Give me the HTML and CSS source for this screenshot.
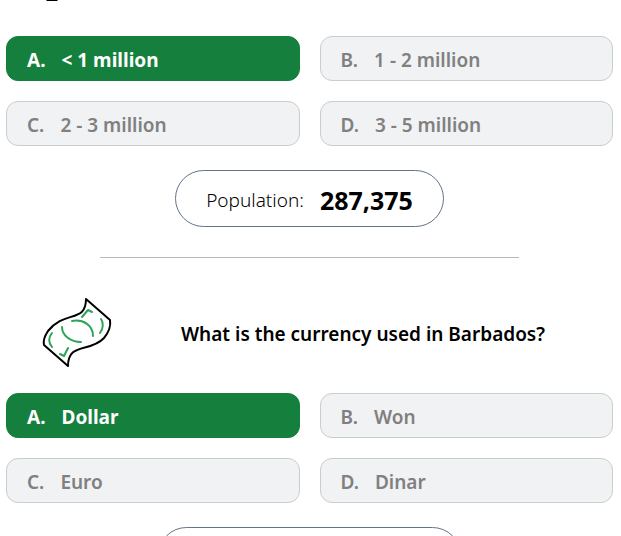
FILE: index.html
```html
<!DOCTYPE html>
<html lang="en">
<head>
<meta charset="utf-8">
<meta name="viewport" content="width=device-width, initial-scale=1">
<title>Barbados quiz</title>
<link rel="stylesheet" href="styles.css">
</head>
<body>
<main class="quiz">
  <section class="question">
    <svg class="icon-edge" viewBox="0 0 12 1" aria-hidden="true"><path d="M0 0H12L11 1H1Z"/></svg>
    <div class="options">
      <button class="option correct" type="button"><span>A.</span><span>&lt; 1 million</span></button>
      <button class="option" type="button"><span>B.</span><span>1 - 2 million</span></button>
      <button class="option" type="button"><span>C.</span><span>2 - 3 million</span></button>
      <button class="option" type="button"><span>D.</span><span>3 - 5 million</span></button>
    </div>
    <p class="answer"><span>Population:</span><strong>287,375</strong></p>
  </section>
  <hr class="divider">
  <section class="question">
    <header class="prompt">
      <svg class="bill" viewBox="11 12 72 72" aria-hidden="true">
        <path class="paper" d="M56 14C56 38 35 25 18 46C14 52 13 56 14 60L38 81C38 57 60 68 74 53C79 47 81 41 80 35Z"/>
        <path class="ink" d="M42 36C53 34 63 40 63 51M32 42C32 50 40 57 51 57M52 32L58 25L62 27M71 34C74 38 73 44 70 48M22 48C18 53 18 57 22 62M38 63L34 71L30 69"/>
      </svg>
      <h2>What is the currency used in Barbados?</h2>
    </header>
    <div class="options">
      <button class="option correct" type="button"><span>A.</span><span>Dollar</span></button>
      <button class="option" type="button"><span>B.</span><span>Won</span></button>
      <button class="option" type="button"><span>C.</span><span>Euro</span></button>
      <button class="option" type="button"><span>D.</span><span>Dinar</span></button>
    </div>
    <div class="answer next"></div>
  </section>
</main>
</body>
</html>
```
FILE: styles.css
```css
* { box-sizing: border-box; }
body {
  margin: 0;
  background: #fff;
  color: #000;
  font-family: "Noto Sans", "Open Sans", sans-serif;
}
.quiz {
  height: 100vh;
  overflow: hidden;
  padding: 0 8px 0 6px;
}
.question {
  display: flex;
  flex-direction: column;
}
.icon-edge {
  width: 12px;
  height: 1px;
  margin: 0 0 35px 40px;
}
.options {
  display: grid;
  grid-template-columns: 1fr 1fr;
  gap: 20px;
}
.option {
  display: flex;
  align-items: center;
  gap: 16px;
  height: 45px;
  padding: 2px 20px 0;
  border: 1px solid #c8cdd0;
  border-radius: 12px;
  background: #f1f2f4;
  color: #808080;
  font: 600 19px/24px "Noto Sans", "Open Sans", sans-serif;
}
.option.correct {
  border-color: #15803d;
  background: #15803d;
  color: #fff;
  font-weight: 700;
}
.answer {
  display: flex;
  align-items: center;
  align-self: center;
  gap: 16px;
  height: 57px;
  margin: 24px 0 0;
  padding: 2px 30px 0;
  border: 1px solid #64748b;
  border-radius: 29px;
  font-size: 19px;
  font-weight: 300;
}
.answer strong {
  font-size: 25px;
  font-weight: 700;
}
.answer.next {
  width: 50%;
}
.divider {
  width: 69%;
  margin: 30px auto 0;
  border: 0;
  border-top: 1px solid #b4b9bd;
}
.prompt {
  display: flex;
  align-items: center;
  margin: 39px 0 24px;
  padding-left: 35px;
}
.prompt h2 {
  flex: 1;
  margin: 0;
  padding-top: 2px;
  text-align: center;
  font-size: 19px;
  font-weight: 600;
}
.bill {
  width: 72px;
  height: 72px;
  fill: none;
  stroke-linecap: round;
  stroke-linejoin: round;
}
.paper {
  fill: #fff;
  stroke: #000;
  stroke-width: 2;
}
.ink {
  stroke: #2ca55b;
  stroke-width: 2;
}
```
